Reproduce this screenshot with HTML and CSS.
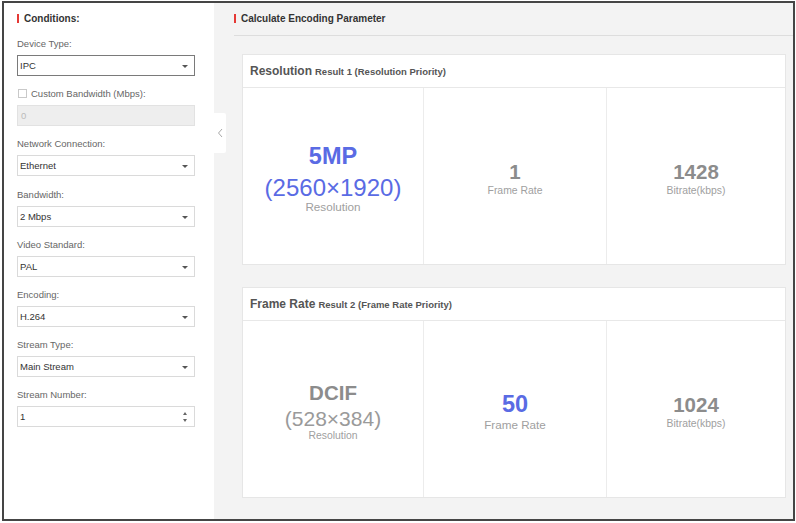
FILE: index.html
```html
<!DOCTYPE html>
<html>
<head>
<meta charset="utf-8">
<title>Calculate Encoding Parameter</title>
<link rel="stylesheet" href="styles.css">
</head>
<body>
<div class="frame">
  <aside class="side">
    <div class="sec-title"><span class="bar"></span>Conditions:</div>
    <div class="group">
      <div class="lbl">Device Type:</div>
      <div class="select focus">IPC</div>
    </div>
    <div class="group">
      <div class="lbl check"><span class="cb"></span>Custom Bandwidth (Mbps):</div>
      <div class="input disabled">0</div>
    </div>
    <div class="group">
      <div class="lbl">Network Connection:</div>
      <div class="select">Ethernet</div>
    </div>
    <div class="group">
      <div class="lbl">Bandwidth:</div>
      <div class="select">2 Mbps</div>
    </div>
    <div class="group">
      <div class="lbl">Video Standard:</div>
      <div class="select">PAL</div>
    </div>
    <div class="group">
      <div class="lbl">Encoding:</div>
      <div class="select">H.264</div>
    </div>
    <div class="group">
      <div class="lbl">Stream Type:</div>
      <div class="select">Main Stream</div>
    </div>
    <div class="group">
      <div class="lbl">Stream Number:</div>
      <div class="input spin">1</div>
    </div>
  </aside>
  <main class="main">
    <div class="main-title"><span class="bar"></span>Calculate Encoding Parameter</div>
    <section class="card">
      <header class="card-head"><span class="head-main">Resolution</span><span class="head-sub">Result 1 (Resolution Priority)</span></header>
      <div class="cells">
        <div class="cell">
          <div class="val hl">5MP</div>
          <div class="dim hl">(2560×1920)</div>
          <div class="cap hl">Resolution</div>
        </div>
        <div class="cell">
          <div class="val">1</div>
          <div class="cap">Frame Rate</div>
        </div>
        <div class="cell">
          <div class="val">1428</div>
          <div class="cap">Bitrate(kbps)</div>
        </div>
      </div>
    </section>
    <section class="card second">
      <header class="card-head"><span class="head-main">Frame Rate</span><span class="head-sub">Result 2 (Frame Rate Priority)</span></header>
      <div class="cells">
        <div class="cell">
          <div class="val">DCIF</div>
          <div class="dim">(528×384)</div>
          <div class="cap">Resolution</div>
        </div>
        <div class="cell">
          <div class="val hl">50</div>
          <div class="cap hl">Frame Rate</div>
        </div>
        <div class="cell">
          <div class="val">1024</div>
          <div class="cap">Bitrate(kbps)</div>
        </div>
      </div>
    </section>
  </main>
  <div class="collapse">
    <svg width="6" height="10" viewBox="0 0 6 10"><polyline points="5,1 1.5,5 5,9" fill="none" stroke="#a8a8a8" stroke-width="1"/></svg>
  </div>
</div>
</body>
</html>
```

FILE: styles.css
```css
html, body {
  margin: 0;
  padding: 0;
  background: #ffffff;
}

body {
  font-family: "Liberation Sans", Arial, sans-serif;
}

.frame {
  position: relative;
  margin: 1px 0 0 2px;
  width: 793px;
  height: 520px;
  box-sizing: border-box;
  border: 2px solid #454545;
  display: flex;
}

/* ---------- left panel ---------- */
.side {
  width: 210px;
  flex: none;
  background: #ffffff;
  padding: 7px 0 0 13px;
  box-sizing: border-box;
}

.sec-title {
  display: flex;
  align-items: center;
  gap: 5px;
  height: 16px;
  margin-bottom: 11px;
  font-size: 10px;
  font-weight: bold;
  color: #333333;
}

.bar {
  display: block;
  width: 2px;
  height: 9px;
  background: #e53935;
}

.group {
  margin-bottom: 11.2px;
}

.lbl {
  height: 13px;
  line-height: 13px;
  margin-bottom: 5px;
  font-size: 9.5px;
  color: #666666;
  white-space: nowrap;
}

.check {
  display: flex;
  align-items: center;
  gap: 4px;
}

.cb {
  display: block;
  width: 9px;
  height: 9px;
  margin-left: 1px;
  box-sizing: border-box;
  border: 1px solid #c9c9c9;
  background: #ffffff;
}

.select,
.input {
  position: relative;
  width: 178px;
  height: 21px;
  box-sizing: border-box;
  border: 1px solid #dadada;
  background: #ffffff;
  padding-left: 2px;
  line-height: 19px;
  font-size: 9.5px;
  color: #333333;
}

.select.focus {
  border-color: #7a7a7a;
}

.select::after {
  content: "";
  position: absolute;
  right: 6px;
  top: 9px;
  border-left: 3px solid transparent;
  border-right: 3px solid transparent;
  border-top: 3px solid #555555;
}

.input.disabled {
  background: #eeeeee;
  border-color: #e2e2e2;
  color: #bbbbbb;
  padding-left: 3px;
}

.input.spin::before,
.input.spin::after {
  content: "";
  position: absolute;
  right: 7px;
  border-left: 2.5px solid transparent;
  border-right: 2.5px solid transparent;
}

.input.spin::before {
  top: 5px;
  border-bottom: 3px solid #666666;
}

.input.spin::after {
  top: 12px;
  border-top: 3px solid #666666;
}

/* ---------- main area ---------- */
.main {
  flex: 1;
  background: #f3f3f3;
  padding-right: 7px;
  display: flex;
  flex-direction: column;
}

.main-title {
  display: flex;
  align-items: center;
  gap: 5px;
  height: 16px;
  margin: 0 -7px 0 20px;
  padding: 7px 0 9px;
  border-bottom: 1px solid #dddddd;
  font-size: 10px;
  font-weight: bold;
  color: #333333;
}

.card {
  margin: 18px 0 0 28px;
  height: 211px;
  box-sizing: border-box;
  background: #ffffff;
  border: 1px solid #e6e6e6;
  display: flex;
  flex-direction: column;
}

.card.second {
  margin-top: 22px;
}

.card-head {
  height: 32px;
  flex: none;
  display: flex;
  align-items: center;
  gap: 3px;
  padding-left: 7px;
  border-bottom: 1px solid #e8e8e8;
  color: #555555;
  font-weight: bold;
}

.head-main {
  font-size: 12px;
}

.head-sub {
  font-size: 9.5px;
  padding-top: 1px;
}

.cells {
  flex: 1;
  display: grid;
  grid-template-columns: 180px 183px 1fr;
}

.cell {
  display: flex;
  flex-direction: column;
  align-items: center;
  justify-content: center;
  padding-top: 4px;
}

.cell + .cell {
  border-left: 1px solid #ececec;
}

.val {
  font-size: 20.5px;
  line-height: 24px;
  font-weight: bold;
  color: #8c8c8c;
}

.val.hl {
  font-size: 23.5px;
  line-height: 28px;
  color: #5a6be4;
}

.dim {
  font-size: 21px;
  line-height: 25px;
  color: #9a9a9a;
  margin-top: 1px;
}

.dim.hl {
  font-size: 24px;
  line-height: 29px;
  color: #5a6be4;
  margin-top: 3px;
}

.cap {
  font-size: 10.4px;
  line-height: 13px;
  color: #a0a0a0;
}

.cap.hl {
  font-size: 11.7px;
  line-height: 14px;
}

.dim + .cap {
  margin-top: -2px;
}

/* ---------- collapse tab ---------- */
.collapse {
  position: absolute;
  left: 209px;
  top: 110px;
  width: 13px;
  height: 40px;
  background: #ffffff;
  border-radius: 0 2px 2px 0;
  display: flex;
  align-items: center;
  justify-content: center;
}
```
